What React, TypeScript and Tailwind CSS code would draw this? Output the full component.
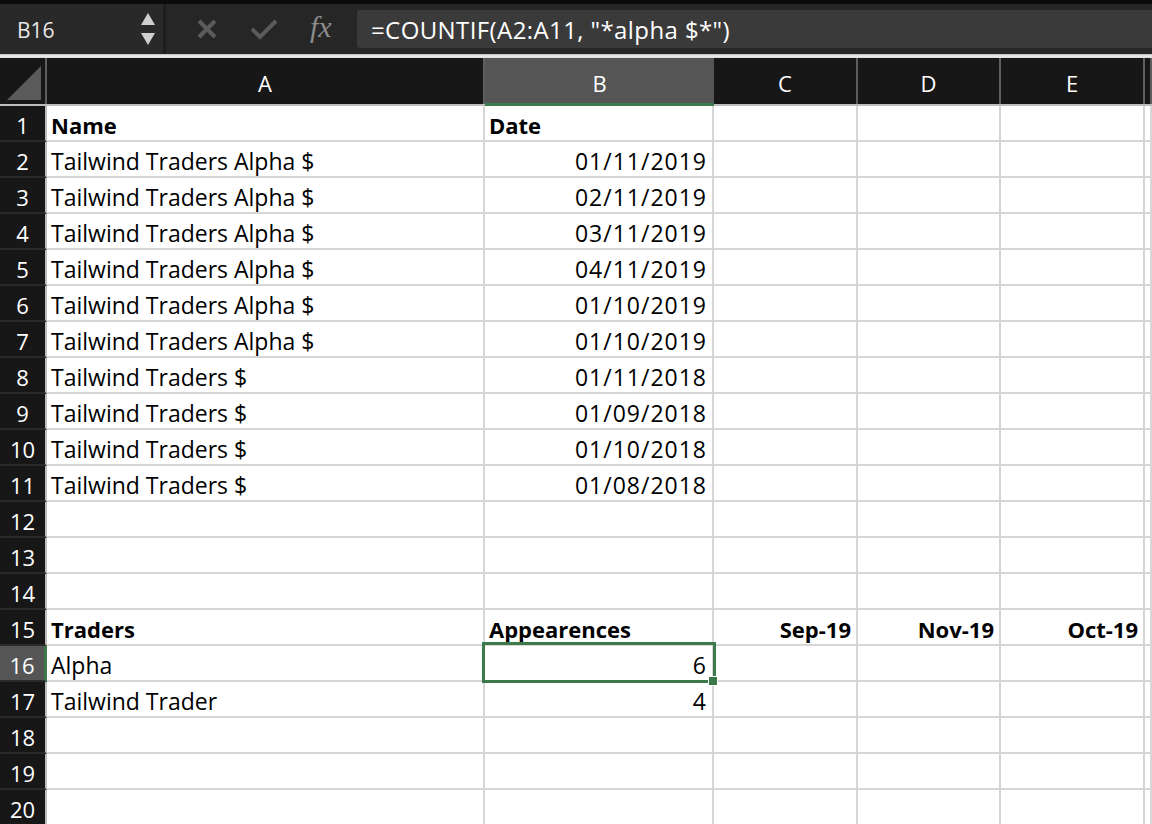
import React from "react";

const cols = ["A", "B", "C", "D", "E", ""];

type Cell = { t?: string; b?: boolean; r?: boolean };
const rows: Cell[][] = [
  [{ t: "Name", b: true }, { t: "Date", b: true }],
  [{ t: "Tailwind Traders Alpha $" }, { t: "01/11/2019", r: true }],
  [{ t: "Tailwind Traders Alpha $" }, { t: "02/11/2019", r: true }],
  [{ t: "Tailwind Traders Alpha $" }, { t: "03/11/2019", r: true }],
  [{ t: "Tailwind Traders Alpha $" }, { t: "04/11/2019", r: true }],
  [{ t: "Tailwind Traders Alpha $" }, { t: "01/10/2019", r: true }],
  [{ t: "Tailwind Traders Alpha $" }, { t: "01/10/2019", r: true }],
  [{ t: "Tailwind Traders $" }, { t: "01/11/2018", r: true }],
  [{ t: "Tailwind Traders $" }, { t: "01/09/2018", r: true }],
  [{ t: "Tailwind Traders $" }, { t: "01/10/2018", r: true }],
  [{ t: "Tailwind Traders $" }, { t: "01/08/2018", r: true }],
  [],
  [],
  [],
  [
    { t: "Traders", b: true },
    { t: "Appearences", b: true },
    { t: "Sep-19", b: true, r: true },
    { t: "Nov-19", b: true, r: true },
    { t: "Oct-19", b: true, r: true },
  ],
  [{ t: "Alpha" }, { t: "6", r: true }],
  [{ t: "Tailwind Trader" }, { t: "4", r: true }],
  [],
  [],
  [],
];

const gridCols = "grid grid-cols-[47px_438px_229px_144px_143px_144px_1fr]";

function cellClass(cell?: Cell) {
  const base =
    "relative border-r-[2px] border-b-[2px] border-[#d6d6d6] flex items-center whitespace-nowrap text-black leading-none pt-[4px]";
  const align = cell?.r ? "justify-end pr-[5px]" : "justify-start pl-[4px]";
  const font = cell?.b
    ? "font-bold text-[22px]"
    : cell?.r
    ? "text-[23px] tracking-[1px]"
    : "text-[23px]";
  return `${base} ${align} ${font}`;
}

export default function App() {
  return (
    <div
      className="w-[1152px] h-[824px] overflow-hidden bg-white"
      style={{ fontFamily: "'Open Sans', Lato, sans-serif" }}
    >
      {/* toolbar */}
      <div className="h-[54px] bg-[#262626] border-t-[4px] border-[#0b0b0b] flex items-stretch">
        <div className="w-[166px] bg-[#292929] border-r-[3px] border-[#1d1d1d] flex items-center justify-between pl-[17px] pr-[8px]">
          <span className="text-[#e6e6e6] text-[21px] leading-none pt-[2px]">B16</span>
          <div className="flex flex-col gap-[8px] items-center">
            <svg width="14" height="12" viewBox="0 0 14 12">
              <polygon points="7,0 14,12 0,12" fill="#cfcfcf" />
            </svg>
            <svg width="14" height="12" viewBox="0 0 14 12">
              <polygon points="0,0 14,0 7,12" fill="#cfcfcf" />
            </svg>
          </div>
        </div>
        <div className="flex items-center pl-[30px] gap-[32px] w-[191px]">
          <svg width="22" height="22" viewBox="0 0 22 22">
            <path d="M3 3 L19 19 M19 3 L3 19" stroke="#5b5b5b" strokeWidth="4" strokeLinecap="butt" />
          </svg>
          <svg width="28" height="22" viewBox="0 0 28 22">
            <path d="M2 11 L10 19 L26 3" stroke="#5b5b5b" strokeWidth="4" fill="none" />
          </svg>
          <span
            className="text-[#8c8c8c] text-[30px] italic leading-none -mt-[4px]"
            style={{ fontFamily: "'Liberation Serif', 'DejaVu Serif', serif" }}
          >
            fx
          </span>
        </div>
        <div className="flex-1 my-[6px] bg-[#3a3a3a] rounded-l-[3px] flex items-center pl-[14px]">
          <span className="text-white text-[24px] leading-none tracking-[0.4px] pt-[2px]">
            =COUNTIF(A2:A11, "*alpha $*")
          </span>
        </div>
      </div>
      <div className="h-[4px] bg-gradient-to-b from-[#bdbdbd] via-[#f0f0f0] to-[#d8d8d8]" />

      {/* column header */}
      <div className={`${gridCols} h-[48px] bg-[#171717] border-b-[2px] border-[#bdbdbd]`}>
        <div className="border-r-[2px] border-[#5e5e5e] flex items-end justify-end pr-[4px] pb-[4px]">
          <svg width="34" height="34" viewBox="0 0 34 34">
            <polygon points="0,34 34,0 34,34" fill="#5a5a5a" />
          </svg>
        </div>
        {cols.map((c, i) => (
          <div
            key={i}
            className={
              c === "B"
                ? "bg-[#555555] border-b-[3px] border-[#3d7a4b] -mb-[2px] flex items-center justify-center text-white text-[22px] leading-none pt-[4px]"
                : "border-r-[2px] border-[#5e5e5e] flex items-center justify-center text-white text-[22px] leading-none pt-[4px]"
            }
          >
            {c}
          </div>
        ))}
      </div>

      {/* rows */}
      {rows.map((row, ri) => {
        const n = ri + 1;
        const sel = n === 16;
        return (
          <div key={ri} className={`${gridCols} h-[36px]`}>
            <div
              className={
                sel
                  ? "bg-[#555555] border-r-[3px] border-[#3d7a4b] border-b-[2px] border-b-[#2a2a2a] flex items-center justify-center text-white text-[22px] leading-none pt-[3px]"
                  : "bg-[#171717] border-r-[2px] border-[#bdbdbd] border-b-[2px] border-b-[#2a2a2a] flex items-center justify-center text-white text-[22px] leading-none pt-[3px]"
              }
            >
              {n}
            </div>
            {[0, 1, 2, 3, 4, 5].map((ci) => {
              const cell = row[ci];
              return (
                <div key={ci} className={cellClass(cell)}>
                  {cell?.t}
                  {sel && ci === 1 && (
                    <>
                      <div className="absolute z-10 -left-[3px] -top-[4px] -right-[4px] -bottom-[3px] border-[3px] border-[#3d7a4b]" />
                      <div className="absolute z-20 -right-[6px] -bottom-[6px] w-[10px] h-[10px] bg-[#3d7a4b] border border-white" />
                    </>
                  )}
                </div>
              );
            })}
          </div>
        );
      })}
    </div>
  );
}
